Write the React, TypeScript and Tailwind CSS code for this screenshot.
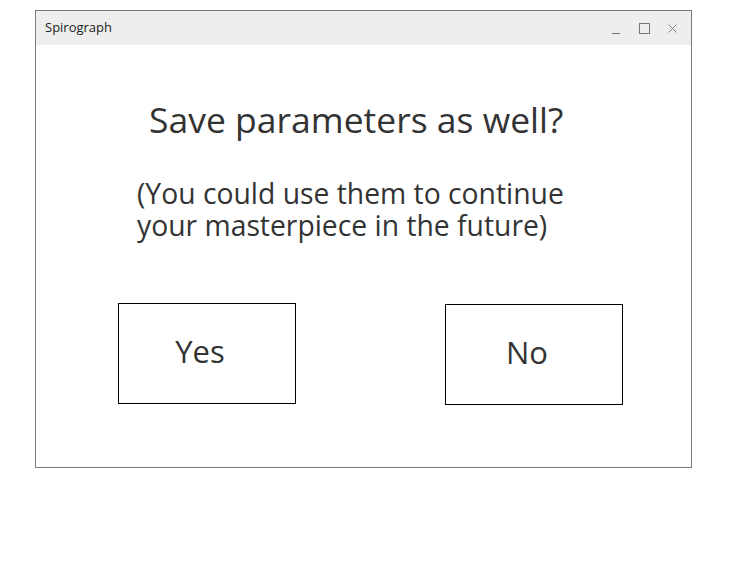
import React from "react";

export default function App() {
  const font = { fontFamily: '"Open Sans", "Noto Sans", sans-serif' };
  return (
    <div className="w-[756px] h-[567px] bg-white overflow-hidden" style={font}>
      <div className="ml-[35px] mt-[10px] w-[657px] h-[458px] border border-[#7a7a7a] flex flex-col">
        <div className="h-[34px] bg-[#eeeeee] flex items-center pl-[9px] pr-[12px] text-[13px] text-[#222]">
          <span className="flex-1">Spirograph</span>
          <div className="flex items-center gap-[15px] text-[#777]">
            <svg width="13" height="13" viewBox="0 0 13 13">
              <line x1="2" y1="11.5" x2="10" y2="11.5" stroke="#777" strokeWidth="1" />
            </svg>
            <svg width="13" height="13" viewBox="0 0 13 13">
              <rect x="1.5" y="1.5" width="10" height="10" fill="none" stroke="#777" strokeWidth="1" />
            </svg>
            <svg width="13" height="13" viewBox="0 0 13 13">
              <path d="M2.5 2.5 L10.5 10.5 M10.5 2.5 L2.5 10.5" stroke="#888" strokeWidth="1" />
            </svg>
          </div>
        </div>
        <div className="flex-1 flex flex-col text-[#333]">
          <div className="mt-[54px] pl-[113px] text-[35.5px] leading-[40px] whitespace-nowrap">
            Save parameters as well?
          </div>
          <div className="mt-[38px] pl-[101px] text-[28.3px] leading-[32px] whitespace-nowrap">
            <div>(You could use them to continue</div>
            <div>your masterpiece in the future)</div>
          </div>
          <div className="mt-[62px] flex items-start">
            <div className="ml-[82px] w-[178px] h-[101px] border border-black flex items-center justify-center text-[31px] pr-[14px] pb-[5px]">
              Yes
            </div>
            <div className="ml-[149px] mt-[1px] w-[178px] h-[101px] border border-black flex items-center justify-center text-[31px] pr-[14px] pb-[5px]">
              No
            </div>
          </div>
        </div>
      </div>
    </div>
  );
}
